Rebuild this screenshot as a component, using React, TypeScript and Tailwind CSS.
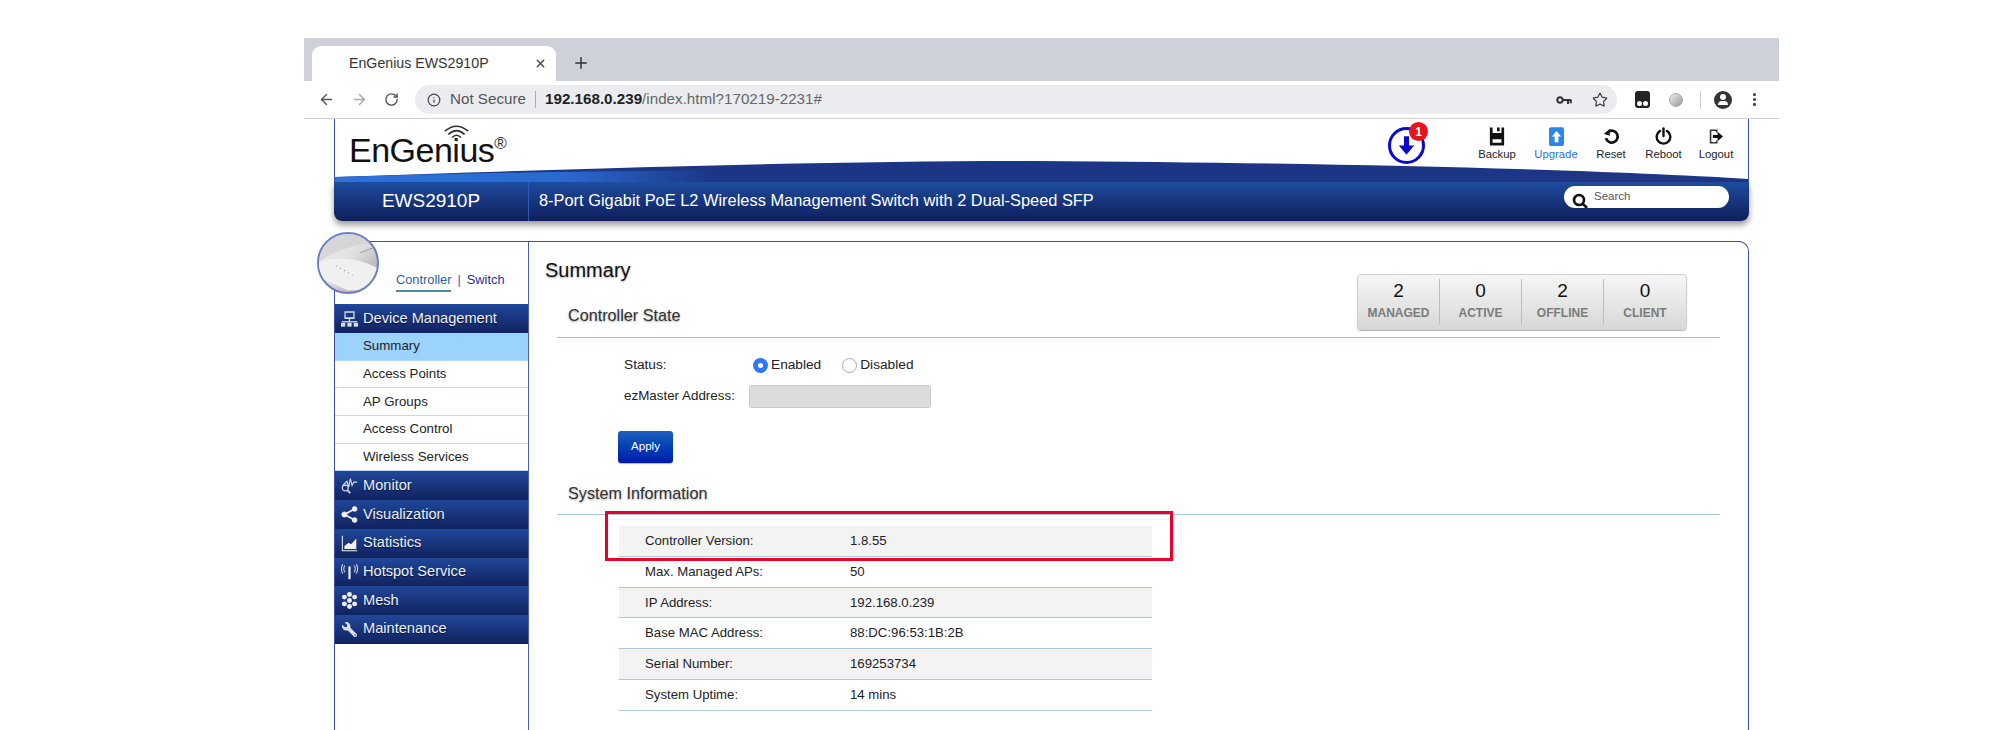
import React from "react";
import { ArrowLeft, ArrowRight, RotateCw, Info, Star, Plus, X, MoreVertical } from "lucide-react";
import { FaWrench } from "react-icons/fa";

const subItems = ["Summary", "Access Points", "AP Groups", "Access Control", "Wireless Services"];

const stats = [
  { value: "2", label: "MANAGED" },
  { value: "0", label: "ACTIVE" },
  { value: "2", label: "OFFLINE" },
  { value: "0", label: "CLIENT" },
];

const sysInfo = [
  ["Controller Version:", "1.8.55"],
  ["Max. Managed APs:", "50"],
  ["IP Address:", "192.168.0.239"],
  ["Base MAC Address:", "88:DC:96:53:1B:2B"],
  ["Serial Number:", "169253734"],
  ["System Uptime:", "14 mins"],
];

// sidebar icons
const NetIcon = () => (
  <svg viewBox="0 0 20 20" className="w-[18px] h-[18px]" fill="#d8dde8">
    <path d="M4 1h12v9H4z M5.5 2.5v5.5h9V2.5z" fillRule="evenodd" />
    <rect x="9.2" y="10" width="1.6" height="3" />
    <rect x="1" y="12.5" width="18" height="1.5" />
    <rect x="0" y="14.5" width="5" height="4.5" />
    <rect x="7.5" y="14.5" width="5" height="4.5" />
    <rect x="15" y="14.5" width="5" height="4.5" />
  </svg>
);
const MonitorIcon = () => (
  <svg viewBox="0 0 20 20" className="w-[17px] h-[17px]" fill="none" stroke="#d8dde8" strokeWidth="1.3">
    <circle cx="5" cy="13" r="3.5" />
    <path d="M2 10 L7 5 L9 12 L11 2 L13 10 L15 6 L19 6" />
    <path d="M8 16 L11 19" strokeWidth="2" />
  </svg>
);
const ShareIcon = () => (
  <svg viewBox="0 0 20 20" className="w-[17px] h-[17px]" fill="#eef0f5" stroke="#eef0f5">
    <circle cx="4" cy="10" r="3" />
    <circle cx="16" cy="3.5" r="2.8" />
    <circle cx="16" cy="16.5" r="2.8" />
    <path d="M4 10 L16 3.5 M4 10 L16 16.5" strokeWidth="2" />
  </svg>
);
const ChartIcon = () => (
  <svg viewBox="0 0 20 20" className="w-[17px] h-[17px]" fill="#eef0f5">
    <path d="M1 1h1.2v17H19v1.2H1z" />
    <path d="M4 16.5V13l5-4 3 2 6-7v12.5z" />
  </svg>
);
const HotspotIcon = () => (
  <svg viewBox="0 0 20 20" className="w-[17px] h-[17px]" fill="none" stroke="#d8dde8" strokeWidth="1.2">
    <path d="M4.5 3 Q2 7 4.5 11 M2 1.5 Q-1 7 2 12.5 M15.5 3 Q18 7 15.5 11 M18 1.5 Q21 7 18 12.5" />
    <path d="M10 4 V19" strokeWidth="2.6" stroke="#eef0f5" />
  </svg>
);
const MeshIcon = () => (
  <svg viewBox="0 0 20 20" className="w-[17px] h-[17px]" fill="#eef0f5">
    {[[10, 3], [4, 6], [16, 6], [10, 10], [4, 14], [16, 14], [10, 17]].map(([cx, cy]) => (
      <circle key={`${cx}-${cy}`} cx={cx} cy={cy} r="2.9" />
    ))}
  </svg>
);

const menu: [string, React.ReactNode][] = [
  ["Monitor", <MonitorIcon />],
  ["Visualization", <ShareIcon />],
  ["Statistics", <ChartIcon />],
  ["Hotspot Service", <HotspotIcon />],
  ["Mesh", <MeshIcon />],
  ["Maintenance", <FaWrench size={15} className="text-[#d8dde8] -scale-x-100" />],
];

const MenuHead = ({ icon, label, tall }: { icon: React.ReactNode; label: string; tall?: boolean }) => (
  <div
    className={`flex items-center pl-[6px] gap-[5px] text-[14.6px] text-[#eef0f6] bg-gradient-to-b from-[#20489a] to-[#11225f] [text-shadow:0_1px_1px_rgba(0,0,0,0.6)] ${
      tall ? "h-[29px]" : "h-[28.7px]"
    }`}
  >
    <span className="w-[17px] flex justify-center">{icon}</span>
    {label}
  </div>
);

const ToolBtn = ({ w, label, blue, children }: { w: string; label: string; blue?: boolean; children: React.ReactNode }) => (
  <div className={`flex flex-col items-center ${w}`}>
    <div className="h-[22px] flex items-center justify-center">{children}</div>
    <span className={`text-[11.3px] leading-[14px] ${blue ? "text-[#2f6fe0]" : "text-[#222]"}`}>{label}</span>
  </div>
);

export default function App() {
  return (
    <div className="w-[2014px] h-[730px] overflow-hidden bg-white pt-[38px] pl-[304px] font-['Liberation_Sans',Arial,sans-serif] text-[#222]">
      <div className="w-[1475px]">
        {/* Browser tabs */}
        <div className="h-[43px] bg-[#ced1d9] pl-[8px] pt-[8px] flex items-start">
          <div className="w-[244px] h-[35px] bg-white rounded-t-[9px] flex items-center pl-[37px] pr-[9px] text-[14.2px] text-[#333]">
            <span className="flex-1">EnGenius EWS2910P</span>
            <X size={13} strokeWidth={2.5} className="text-[#444]" />
          </div>
          <Plus size={18} strokeWidth={2} className="ml-[16px] mt-[8px] text-[#333]" />
        </div>

        {/* Address bar */}
        <div className="h-[38px] bg-white border-b border-[#cfcfcf] flex items-center pl-[14px] pr-[8px] text-[#555]">
          <ArrowLeft size={17} strokeWidth={2} />
          <ArrowRight size={17} strokeWidth={2} className="ml-[16px] text-[#aaa]" />
          <RotateCw size={15} strokeWidth={2.2} className="ml-[16px]" />
          <div className="ml-[16px] w-[1202px] h-[29px] bg-[#ebecef] rounded-full flex items-center pl-[12px] pr-[8px] text-[15.2px]">
            <Info size={14} className="text-[#444]" />
            <span className="ml-[9px] text-[#555]">Not Secure</span>
            <span className="mx-[9px] w-px h-[17px] bg-[#aaa]" />
            <span className="font-bold text-[#222]">192.168.0.239</span>
            <span className="text-[#666]">/index.html?170219-2231#</span>
            <svg viewBox="0 0 20 12" className="ml-auto w-[16px] h-[10px]" fill="none" stroke="#333" strokeWidth="2.6">
              <circle cx="5" cy="6" r="3.4" />
              <path d="M8 6 H19 M15 6 V11 M18.5 6 V10" />
            </svg>
            <Star size={16} strokeWidth={1.8} className="ml-[20px] mr-[1px] text-[#444]" />
          </div>
          <div className="ml-[18px] w-[15px] h-[17px] bg-[#222] rounded-[3px] flex items-end justify-center gap-[1px] pb-[2px]">
            <span className="w-[5px] h-[5px] rounded-full bg-white" />
            <span className="w-[5px] h-[5px] rounded-full bg-white" />
          </div>
          <div className="ml-[19px] w-[14px] h-[14px] rounded-full bg-gradient-to-br from-[#eee] to-[#999] border border-[#aaa]" />
          <span className="ml-[17px] w-px h-[18px] bg-[#ccc]" />
          <div className="ml-[13px] w-[18px] h-[18px] rounded-full bg-[#333] flex flex-col items-center justify-center overflow-hidden">
            <span className="w-[6px] h-[6px] rounded-full bg-white" />
            <span className="w-[10px] h-[4px] rounded-t-full bg-white mt-px" />
          </div>
          <MoreVertical size={17} strokeWidth={2.5} className="ml-[14px] text-[#444]" />
        </div>

        {/* Page */}
        <div className="px-[30px]">
          <div className="h-[102px] flex flex-col">
            <div className="relative h-[63px] border-x border-[#3c50ab] flex">
              <svg viewBox="0 0 1415 63" preserveAspectRatio="none" className="absolute left-0 top-0 w-full h-full">
                <defs>
                  <linearGradient id="swoosh" x1="0" x2="1" y1="0" y2="0">
                    <stop offset="0" stopColor="#2b72da" />
                    <stop offset="0.3" stopColor="#2a6ad0" />
                    <stop offset="0.5" stopColor="#1c3585" />
                    <stop offset="1" stopColor="#1c3585" />
                  </linearGradient>
                </defs>
                <path d="M0 58 C300 48 500 42 700 42 C1000 44 1250 50 1415 60 L1415 63 L0 63 Z" fill="#1c3585" />
                <path d="M0 58 C200 52 400 50 560 52 C640 54 700 58 760 63 L0 63 Z" fill="url(#swoosh)" />
              </svg>
              <div className="relative z-10 pl-[14px] pt-[9px] flex items-start">
                <span className="relative text-[34px] leading-[44px] tracking-[-0.5px] text-[#111]">EnGenius</span>
                <span className="text-[17px] leading-[20px] mt-[6px] text-[#333]">®</span>
                <svg viewBox="0 0 30 20" className="absolute left-[108px] top-[5px] w-[27px] h-[18px]" fill="none" stroke="#333" strokeWidth="1.8">
                  <path d="M2 8 Q15 -3 28 8 M6 11.5 Q15 3 24 11.5 M10 15 Q15 10 20 15" />
                  <circle cx="15" cy="18" r="1.3" fill="#333" stroke="none" />
                </svg>
              </div>
              <div className="relative z-10 ml-auto flex items-start pt-[6px] pr-[6px]">
                <div className="relative mr-[42px] mt-[2px] w-[37px] h-[37px] rounded-full border-[3px] border-[#0a0acb] flex items-center justify-center">
                  <svg viewBox="0 0 20 24" className="w-[17px] h-[21px]" fill="#0a0acb">
                    <path d="M7 1h6v11h6L10 23 1 12h6z" />
                  </svg>
                  <span className="absolute -right-[6px] -top-[8px] w-[19px] h-[19px] rounded-full bg-[#e8131b] text-white text-[12px] font-bold flex items-center justify-center">
                    1
                  </span>
                </div>
                <ToolBtn w="w-[60px]" label="Backup">
                  <svg viewBox="0 0 18 20" className="w-[16px] h-[19px]" fill="#111">
                    <path d="M1 0h3v6h10V0h3v20H1z M4 13v4h10v-4z M9 0h3v4H9z" fillRule="evenodd" />
                  </svg>
                </ToolBtn>
                <ToolBtn w="w-[58px]" label="Upgrade" blue>
                  <svg viewBox="0 0 16 20" className="w-[15px] h-[19px]">
                    <rect width="16" height="20" rx="2" fill="#2b86ee" />
                    <path d="M8 4 L13 10 H10 V16 H6 V10 H3 Z" fill="#fff" />
                  </svg>
                </ToolBtn>
                <ToolBtn w="w-[52px]" label="Reset">
                  <svg viewBox="0 0 20 20" className="w-[17px] h-[17px]" fill="none" stroke="#111" strokeWidth="3.2">
                    <path d="M7 4 A7 7 0 1 1 3.5 12" />
                    <path d="M1 7 L8 1 L8 9 Z" fill="#111" strokeWidth="0" />
                  </svg>
                </ToolBtn>
                <ToolBtn w="w-[53px]" label="Reboot">
                  <svg viewBox="0 0 20 20" className="w-[17px] h-[18px]" fill="none" stroke="#111" strokeWidth="2.8" strokeLinecap="round">
                    <path d="M6 4 A8 8 0 1 0 14 4" />
                    <path d="M10 1 V10" />
                  </svg>
                </ToolBtn>
                <ToolBtn w="w-[52px]" label="Logout">
                  <svg viewBox="0 0 18 20" className="w-[14px] h-[17px]">
                    <path d="M1 1h10v4H9V3H3v14h6v-2h2v4H1z" fill="#333" />
                    <path d="M5 8h6V4l7 6-7 6v-4H5z" fill="#111" />
                  </svg>
                </ToolBtn>
              </div>
            </div>
            <div className="h-[39px] rounded-b-[8px] bg-gradient-to-b from-[#1f4c9e] to-[#0f1f5c] shadow-[0_4px_6px_rgba(0,0,0,0.4)] flex items-center text-white">
              <div className="w-[195px] h-full flex items-center justify-center pb-[3px] border-r border-[#2c5cb6] text-[19px] leading-none">EWS2910P</div>
              <span className="ml-[10px] pb-[3px] text-[16.4px]">8-Port Gigabit PoE L2 Wireless Management Switch with 2 Dual-Speed SFP</span>
              <div className="ml-auto mr-[20px] mb-[9px] w-[165px] h-[22px] bg-white rounded-full flex items-start pl-[8px] text-[11.5px] leading-[20px] text-[#555] overflow-hidden">
                <svg viewBox="0 0 16 16" className="w-[16px] h-[16px] mt-[7px]" fill="none" stroke="#111" strokeWidth="2.6">
                  <circle cx="7" cy="7" r="5" />
                  <path d="M10.5 10.5 L15 15" />
                </svg>
                <span className="ml-[6px]">Search</span>
              </div>
            </div>
          </div>

          {/* Body */}
          <div className="mt-[20px] h-[600px] flex border-x border-t border-[#3c50ab] rounded-tr-[10px]">
            <div className="relative w-[194px] shrink-0 border-r border-[#4a5fb5]">
              <div className="absolute -left-[18px] -top-[10px] w-[62px] h-[62px] rounded-full border-2 border-[#6b7fc0] overflow-hidden bg-gradient-to-br from-[#f4f4f4] via-[#dedede] to-[#9a9a9a]">
                <svg viewBox="0 0 62 62" className="w-full h-full">
                  <path d="M0 30 Q20 14 62 8 L62 0 L0 0 Z" fill="#cfcfcf" opacity="0.7" />
                  <path d="M0 30 Q30 20 62 36 L62 60 L30 60 L0 46 Z" fill="#f0f0f0" />
                  <path d="M18 34 L36 44" stroke="#888" strokeWidth="1.2" strokeDasharray="1 4" />
                  <path d="M44 20 L60 14" stroke="#999" strokeWidth="1" />
                </svg>
              </div>
              <div className="h-[62px] pl-[61px] pt-[28px] text-[12.8px] leading-[20px] flex items-start">
                <span className="text-[#2b5fa5] border-b-2 border-[#4c8a9c] leading-[20px]">Controller</span>
                <span className="mx-[6px] text-[#5a4fb0]">|</span>
                <span className="text-[#1f2f8f]">Switch</span>
              </div>
              <MenuHead icon={<NetIcon />} label="Device Management" tall />
              {subItems.map((s, i) => (
                <div
                  key={s}
                  className={`h-[27.7px] flex items-center pl-[28px] text-[13.3px] text-[#222] border-b border-[#b9dcf5] ${i === 0 ? "bg-[#9cd3fd]" : "bg-white"}`}
                >
                  {s}
                </div>
              ))}
              {menu.map(([label, icon]) => (
                <MenuHead key={label} icon={icon} label={label} />
              ))}
            </div>

            <div className="flex-1">
              <div className="ml-[28px] mr-[28px] pt-[16px] border-b border-[#a9bdd8] flex">
                <div className="pb-[12px]">
                  <h1 className="-ml-[12px] text-[20px] leading-[24px] text-[#111] [text-shadow:0_1px_2px_rgba(0,0,0,0.35)]">Summary</h1>
                  <h2 className="mt-[23px] ml-[11px] text-[16.2px] leading-[20px] text-[#333] [text-shadow:0_1px_2px_rgba(0,0,0,0.35)]">Controller State</h2>
                </div>
                <div className="ml-auto mr-[33px] mt-[16px] self-start h-[56px] flex rounded-[4px] border border-[#d0d0d0] bg-gradient-to-b from-[#f6f6f6] to-[#d8d8d8] shadow-[0_1px_1px_rgba(0,0,0,0.3)]">
                  {stats.map((st, i) => (
                    <div key={st.label} className="w-[82px] flex items-stretch">
                      <div className="flex-1 flex flex-col items-center pt-[4px]">
                        <span className="text-[19px] leading-[23px] text-[#111]">{st.value}</span>
                        <span className="mt-[2px] text-[12px] leading-[19px] font-bold text-[#7b7b7b]">{st.label}</span>
                      </div>
                      {i < 3 && <span className="w-px my-[4px] bg-[#bdbdbd]" />}
                    </div>
                  ))}
                </div>
              </div>

              <div className="ml-[95px] text-[13.7px] text-[#222]">
                <div className="mt-[17px] h-[20px] flex items-center">
                  <span className="w-[129px]">Status:</span>
                  <span className="w-[15px] h-[15px] rounded-full bg-[#2f78f5] flex items-center justify-center mt-[1px]">
                    <span className="w-[5px] h-[5px] rounded-full bg-white" />
                  </span>
                  <span className="ml-[3px]">Enabled</span>
                  <span className="ml-[21px] w-[15px] h-[15px] rounded-full border border-[#aaa] bg-white mt-[1px]" />
                  <span className="ml-[3px]">Disabled</span>
                </div>
                <div className="mt-[10px] flex items-center">
                  <span className="w-[125px] text-[13.4px]">ezMaster Address:</span>
                  <span className="w-[182px] h-[23px] rounded-[3px] bg-[#dcdcdc] border border-[#c8c8c8]" />
                </div>
                <button className="-ml-[6px] mt-[23px] block w-[55px] h-[32px] rounded-[3px] bg-gradient-to-b from-[#1f5ebc] to-[#0016a8] text-white text-[11.5px] shadow-[0_1px_1px_rgba(0,0,0,0.3)]">
                  Apply
                </button>
              </div>

              <div className="mx-[28px] mt-[20px] pb-[11px] border-b border-[#a9c4de]">
                <h2 className="ml-[11px] text-[16.2px] leading-[20px] text-[#333] [text-shadow:0_1px_2px_rgba(0,0,0,0.35)]">System Information</h2>
              </div>

              <div className="relative ml-[90px] mt-[11px] w-[533px] text-[13.2px]">
                {sysInfo.map(([k, v], i) => (
                  <div key={k} className={`h-[30.8px] flex items-center pl-[26px] border-b border-[#a9c8e0] ${i % 2 === 0 ? "bg-[#f3f3f3]" : "bg-white"}`}>
                    <span className="w-[205px]">{k}</span>
                    <span>{v}</span>
                  </div>
                ))}
                <div className="absolute -left-[14px] -top-[15px] w-[568px] h-[50px] border-[3px] border-[#e8002b]" />
              </div>
            </div>
          </div>
        </div>
      </div>
    </div>
  );
}
